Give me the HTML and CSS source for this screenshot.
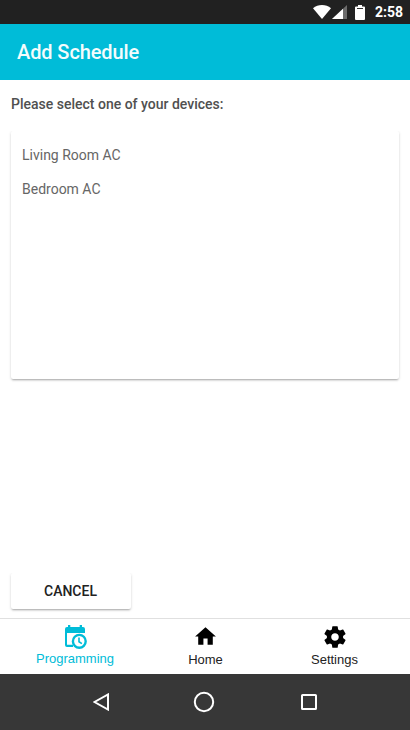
FILE: index.html
```html
<!DOCTYPE html>
<html lang="en">
<head>
<meta charset="utf-8">
<title>Add Schedule</title>
<link rel="stylesheet" href="styles.css">
</head>
<body>
<div class="screen">
  <div class="status">
    <svg class="wifi" width="18" height="14" viewBox="0 0 18 14"><path d="M0 3.300C5-1.100 13-1.100 18 3.300L9 14z" fill="#fff"/></svg>
    <svg class="signal" width="15" height="14" viewBox="0 0 15 14"><path d="M15 0v14H0z" fill="#6b6b6b"/><path d="M11 3.730V14H0z" fill="#fff"/></svg>
    <svg class="battery" width="10" height="15" viewBox="0 0 10 15"><path d="M3 0h4v1.500h2q1 0 1 1V14q0 1-1 1H1q-1 0-1-1V2.500q0-1 1-1h2z" fill="#fff"/><path d="M2 3.500h6" stroke="#333"/></svg>
    <span class="clock">2:58</span>
  </div>
  <header class="appbar"><h1>Add Schedule</h1></header>
  <main class="content">
    <h2 class="prompt">Please select one of your devices:</h2>
    <ul class="devices">
      <li>Living Room AC</li>
      <li>Bedroom AC</li>
    </ul>
    <button class="cancel">CANCEL</button>
  </main>
  <nav class="tabs">
    <a class="tab programming active">
      <svg width="22" height="24" viewBox="0 0 22 24"><path d="M3 0h2.300v2h9.400V0H17v2h1q2 0 2 2v4H2v11.700h6V22H2q-2 0-2-2V4q0-2 2-2h1z" fill="currentColor"/><circle cx="14.300" cy="16.300" r="6.400" fill="#fff" stroke="currentColor" stroke-width="2.400"/><path d="M14 12.500V16.700l2.900 1.900" fill="none" stroke="currentColor" stroke-width="1.600"/></svg>
      <span>Programming</span>
    </a>
    <a class="tab home">
      <svg width="25" height="25" viewBox="0 0 24 24"><path d="M10 20v-6h4v6h5v-8h3L12 3 2 12h3v8z" fill="currentColor"/></svg>
      <span>Home</span>
    </a>
    <a class="tab settings">
      <svg width="26" height="26" viewBox="0 0 24 24"><path d="M19.430 12.980c.04-.32.07-.64.07-.98s-.03-.66-.07-.98l2.110-1.650c.19-.15.24-.42.12-.64l-2-3.460c-.12-.22-.39-.3-.61-.22l-2.490 1c-.52-.4-1.080-.73-1.690-.98l-.38-2.650C14.460 2.180 14.250 2 14 2h-4c-.25 0-.46.18-.49.42l-.38 2.650c-.61.25-1.170.59-1.690.98l-2.490-1c-.23-.09-.49 0-.61.22l-2 3.460c-.13.22-.07.49.12.64l2.110 1.650c-.04.32-.07.65-.07.98s.03.66.07.98l-2.110 1.650c-.19.15-.24.42-.12.64l2 3.460c.12.22.39.3.61.22l2.490-1c.52.4 1.080.73 1.690.98l.38 2.650c.03.24.24.42.49.42h4c.25 0 .46-.18.49-.42l.38-2.650c.61-.25 1.170-.59 1.690-.98l2.490 1c.23.09.49 0 .61-.22l2-3.460c.12-.22.07-.49-.12-.64l-2.110-1.650zM12 15.500c-1.930 0-3.500-1.570-3.500-3.500s1.570-3.500 3.500-3.500 3.500 1.570 3.500 3.500-1.570 3.500-3.500 3.500z" fill="currentColor"/></svg>
      <span>Settings</span>
    </a>
  </nav>
  <div class="sysnav">
    <svg class="back" width="17" height="18" viewBox="0 0 17 18"><path d="M15 1.500v15L1.500 9z"/></svg>
    <svg class="circle" width="22" height="22" viewBox="0 0 22 22"><circle cx="11" cy="11" r="9.200"/></svg>
    <svg class="recent" width="16" height="16" viewBox="0 0 16 16"><rect x="1" y="1" width="14" height="14" rx=".6"/></svg>
  </div>
</div>
</body>
</html>
```
FILE: styles.css
```css
* { box-sizing: border-box; }
body { margin: 0; font-family: Roboto, sans-serif; background: #fff; }
.screen { width: 410px; height: 730px; display: flex; flex-direction: column; overflow: hidden; }
svg { display: block; flex: none; }

.status { height: 24px; background: #212121; display: flex; align-items: flex-start; padding: 5px 7px 0 0; justify-content: flex-end; color: #fff; }
.signal { margin-left: 1px; }
.battery { margin-left: 8px; }
.clock { margin-left: 10px; font-size: 14px; line-height: 15px; font-weight: 700; }

.appbar { height: 56px; background: #00bcd8; padding-left: 17px; display: flex; align-items: center; }
.appbar h1 { margin: 0; font-size: 20px; font-weight: 500; letter-spacing: -.1px; color: #f4fcfd; white-space: nowrap; }

.content { height: 538px; padding: 14px 11px 9px; display: flex; flex-direction: column; }
.prompt { margin: 0; font-size: 14px; line-height: 20px; font-weight: 500; color: #505050; white-space: nowrap; }
.devices, .cancel { background: #fff; border-radius: 2px; box-shadow: 0 2px 2px -1px rgba(0,0,0,.24), 0 1px 3px rgba(0,0,0,.16); clip-path: inset(0 -5px -6px -5px); }
.devices { list-style: none; margin: 17px 0 0; padding: 7px 11px; height: 248px; color: #666; font-size: 14px; }
.devices li { height: 34px; line-height: 34px; }
.cancel { margin-top: auto; width: 120px; height: 36px; border: 0; padding: 0 1px 0 0; font: 500 14px/36px Roboto, sans-serif; color: #222; }

.tabs { height: 56px; border-top: 1px solid #e0e0e0; display: grid; grid-template-columns: 150px 111px 147px; background: #fff; }
.tab { display: flex; flex-direction: column; align-items: center; color: #000; font: 13px/16px "Liberation Sans", Arial, sans-serif; }
.tab span { color: #222; }
.active, .active span { color: #00bcd8; }
.programming { padding-top: 6px; }
.programming svg { margin-left: 2px; }
.programming span { margin-top: 2px; }
.home { padding-top: 5px; }
.home svg { margin-right: 1px; }
.home span { margin-top: 3px; }
.settings { padding-top: 5px; }
.settings span { margin-top: 2px; }

.sysnav { height: 56px; background: #373737; display: flex; align-items: center; padding-left: 93px; }
.sysnav svg { fill: none; stroke: #fff; stroke-width: 2; }
.circle { margin-left: 83px; }
.recent { margin-left: 86px; }
```
